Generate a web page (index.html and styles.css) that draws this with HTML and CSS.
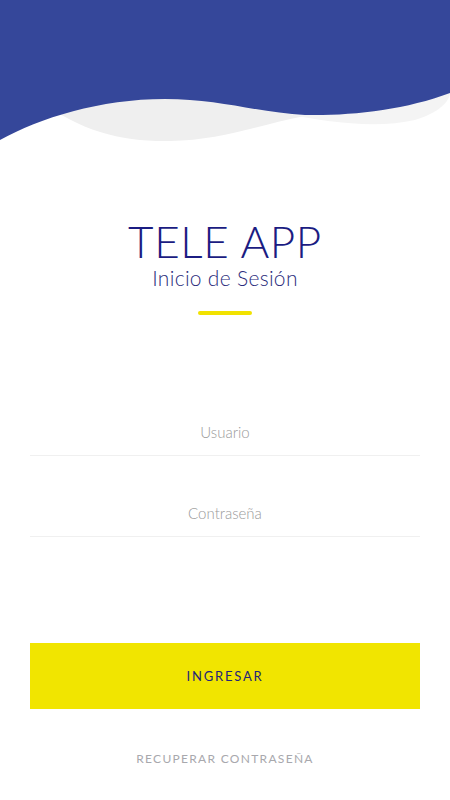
FILE: index.html
```html
<!DOCTYPE html>
<html lang="es">
<head>
    <meta charset="UTF-8"/>
    <meta name="viewport" content="width=device-width, initial-scale=1.0"/>
    <title>Tele App – Inicio de Sesión</title>
    <link rel="stylesheet" href="styles.css">
</head>
<body>

<header class="wave">
    <svg viewBox="0 0 450 150" width="450" height="150" preserveAspectRatio="none">
        <path d="M40,100 C80,132 125,142 170,141 C220,140 255,126 305,116 L305,0 L40,0 Z" fill="#efefef"/>
        <path d="M280,112 C330,124 380,128 415,120 C435,114 448,104 450,94 L450,0 L280,0 Z" fill="#f4f4f4"/>
        <path d="M0,0 H450 V93 C405,110 350,116 305,115 C260,113 220,99 165,99 C100,99 40,118 0,140 Z" fill="#35479a"/>
    </svg>
</header>

<main class="login">
    <div class="brand">
        <h1>TELE APP</h1>
        <h2>Inicio de Sesión</h2>
        <div class="accent"></div>
    </div>

    <form class="fields">
        <input type="text" placeholder="Usuario">
        <input type="password" placeholder="Contraseña">
    </form>

    <button class="btn-login">INGRESAR</button>
    <a class="recover" href="#">RECUPERAR CONTRASEÑA</a>
</main>

</body>
</html>
```

FILE: styles.css
```css
* {
    box-sizing: border-box;
}

body {
    margin: 0;
    padding: 0;
    background: #fff;
    font-family: 'Lato', 'Open Sans', sans-serif;
    width: 450px;
    height: 800px;
    overflow: hidden;
}

.wave {
    height: 150px;
}

.wave svg {
    display: block;
}

.login {
    display: flex;
    flex-direction: column;
    align-items: center;
    padding: 0 30px;
}

.brand {
    display: flex;
    flex-direction: column;
    align-items: center;
    margin-top: 66px;
}

.brand h1 {
    margin: 0;
    font-size: 44px;
    font-weight: 300;
    line-height: 50px;
    letter-spacing: 0.6px;
    color: #1b1c82;
}

.brand h2 {
    margin: 0;
    font-size: 21px;
    font-weight: 300;
    line-height: 24px;
    letter-spacing: 0.3px;
    color: #2b2c7c;
}

.accent {
    width: 54px;
    height: 4px;
    margin-top: 21px;
    border-radius: 2px;
    background: #f1e200;
}

.fields {
    width: 100%;
    display: flex;
    flex-direction: column;
    gap: 25px;
    margin-top: 85px;
}

.fields input {
    width: 100%;
    height: 56px;
    border: none;
    border-bottom: 1px solid #f0f0f0;
    outline: none;
    padding: 0;
    padding-top: 8px;
    text-align: center;
    font-family: inherit;
    font-size: 15px;
    font-weight: 300;
    color: #666;
    background: transparent;
}

.fields input::placeholder {
    color: #9a9a9a;
}

.btn-login {
    width: 100%;
    height: 66px;
    margin-top: 106px;
    border: none;
    background: #f1e500;
    font-family: inherit;
    font-size: 13px;
    letter-spacing: 1.8px;
    color: #232478;
    cursor: pointer;
}

.recover {
    margin-top: 42px;
    font-size: 12px;
    letter-spacing: 1.3px;
    color: #a8a8ad;
    text-decoration: none;
}
```
